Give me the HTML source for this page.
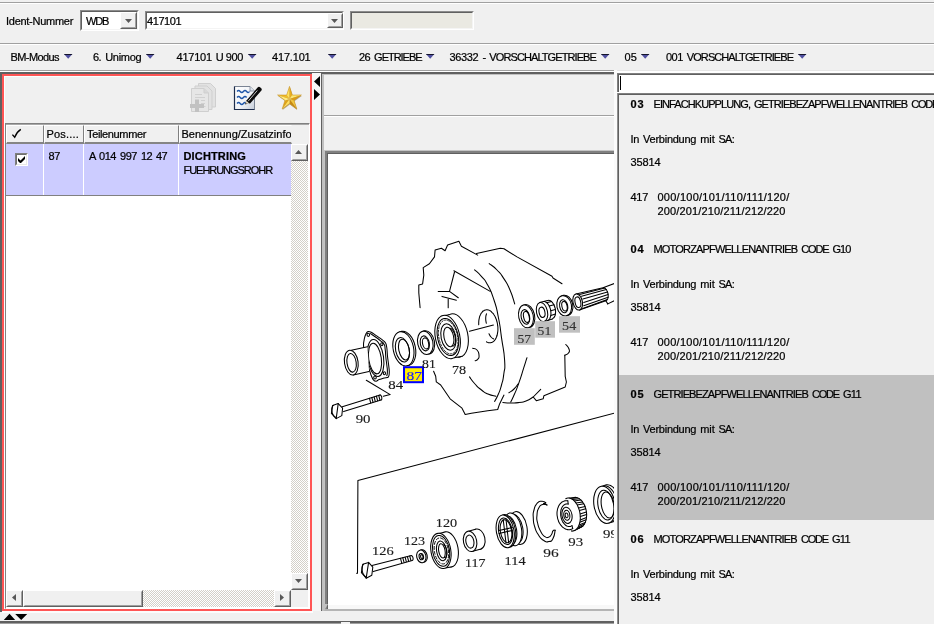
<!DOCTYPE html>
<html><head><meta charset="utf-8"><title>EPC</title>
<style>
html,body{margin:0;padding:0;}
body{width:934px;height:624px;overflow:hidden;background:#f0f0f0;font-family:"Liberation Sans",sans-serif;font-size:11px;color:#000;position:relative;}
.a{position:absolute;}
.t{position:absolute;white-space:nowrap;line-height:13px;height:13px;-webkit-text-stroke:0.22px #000;}
.b{font-weight:bold;}
.r{position:absolute;}
.sunk{position:absolute;box-sizing:border-box;border:1px solid;border-color:#8c8c8c #fff #fff #8c8c8c;}
.sunk>i{position:absolute;left:0;top:0;right:0;bottom:0;border:1px solid;border-color:#606060 #f4f4f4 #f4f4f4 #606060;display:block;}
.btn{position:absolute;box-sizing:border-box;background:#f0f0f0;border:1px solid;border-color:#fff #606060 #606060 #fff;}
.btn>i{position:absolute;left:0;top:0;right:0;bottom:0;border:1px solid;border-color:#f0f0f0 #a0a0a0 #a0a0a0 #f0f0f0;display:block;}
.dith{position:absolute;background-color:#fff;background-image:linear-gradient(45deg,#d4d0c8 25%,transparent 25%,transparent 75%,#d4d0c8 75%),linear-gradient(45deg,#d4d0c8 25%,transparent 25%,transparent 75%,#d4d0c8 75%);background-size:2px 2px;background-position:0 0,1px 1px;}
.hd{position:absolute;box-sizing:border-box;height:19px;top:125px;background:#f0f0f0;border:1px solid;border-color:#fff #808080 #808080 #fff;border-bottom:2px solid #858585;}
#w{position:absolute;left:0;top:0;width:934px;height:624px;overflow:hidden;will-change:transform;}
</style></head><body><div id="w">
<svg width="0" height="0" style="position:absolute"><defs>
<linearGradient id="ag" x1="0" y1="0" x2="0" y2="1"><stop offset="0" stop-color="#6a6aa8"/><stop offset="0.5" stop-color="#2a2a78"/><stop offset="1" stop-color="#202060"/></linearGradient>
</defs></svg>
<!-- frame lines -->
<div class="r" style="left:0;top:2px;width:934px;height:1px;background:#a0a0a0"></div>
<div class="r" style="left:0;top:3px;width:934px;height:1px;background:#fff"></div>
<div class="r" style="left:0;top:43px;width:934px;height:1px;background:#a0a0a0"></div>
<div class="r" style="left:0;top:44px;width:934px;height:1px;background:#fff"></div>
<div class="r" style="left:0;top:70px;width:934px;height:1px;background:#a0a0a0"></div>
<div class="r" style="left:0;top:71px;width:934px;height:1px;background:#fff"></div>
<!-- ident row -->
<div class="sunk" style="left:80px;top:10px;width:59px;height:21px;background:#fff"><i></i></div>
<div class="btn" style="left:120px;top:12px;width:17px;height:17px"><i></i></div>
<svg class="a" style="left:125px;top:19px" width="7" height="4"><path d="M0 0h7l-3.5 4z" fill="#585858"/></svg>
<div class="sunk" style="left:145px;top:11px;width:199px;height:19px;background:#fff"><i></i></div>
<div class="btn" style="left:327px;top:13px;width:16px;height:15px"><i></i></div>
<svg class="a" style="left:331px;top:19px" width="7" height="4"><path d="M0 0h7l-3.5 4z" fill="#585858"/></svg>
<div class="sunk" style="left:350px;top:11px;width:124px;height:19px;background:#eae9e2"><i></i></div>

<!-- left panel -->
<div class="r" style="left:0;top:72px;width:312px;height:2px;background:#606060"></div>
<div class="r" style="left:0;top:72px;width:2px;height:540px;background:#606060"></div>
<div class="r" style="left:2px;top:74px;width:310px;height:537px;box-sizing:border-box;border:2px solid #ff5555;"></div>
<div class="r" style="left:4px;top:76px;width:1px;height:533px;background:#f8ffff"></div>
<div class="r" style="left:4px;top:76px;width:306px;height:1px;background:#f8ffff"></div>
<div class="r" style="left:312px;top:73px;width:9px;height:538px;background:#f6f6f6"></div>
<!-- table scrollpane -->
<div class="r" style="left:5px;top:123px;width:305px;height:486px;box-sizing:border-box;border:1px solid;border-color:#808080 #fff #fff #808080;background:#fff"></div>
<div class="r" style="left:6px;top:124px;width:303px;height:20px;background:#f0f0f0"></div>
<div class="r" style="left:6px;top:124px;width:303px;height:1px;background:#a8a8a8"></div>
<div class="hd" style="left:6px;width:38px"></div>
<div class="hd" style="left:44px;width:40px"></div>
<div class="hd" style="left:84px;width:95px"></div>
<div class="hd" style="left:179px;width:113px;border-right-color:#f0f0f0"></div>
<svg class="a" style="left:11px;top:128px" width="12" height="11" viewBox="0 0 12 11"><path d="M1.4 6.6L3.7 9.2C5 6 7 3.2 9.8 1.4" fill="none" stroke="#000" stroke-width="1.35"/></svg>
<!-- row -->
<div class="r" style="left:6px;top:144px;width:285px;height:51px;background:#ccccff"></div>
<div class="r" style="left:6px;top:195px;width:285px;height:1px;background:#808080"></div>
<div class="r" style="left:43px;top:144px;width:1px;height:51px;background:#fff"></div>
<div class="r" style="left:83px;top:144px;width:1px;height:51px;background:#fff"></div>
<div class="r" style="left:178px;top:144px;width:1px;height:51px;background:#fff"></div>
<div class="r" style="left:15px;top:153px;width:13px;height:13px;box-sizing:border-box;background:#fff;border:1px solid;border-color:#808080 #fff #fff #808080"></div>
<div class="r" style="left:16px;top:154px;width:11px;height:11px;box-sizing:border-box;border:1px solid;border-color:#707070 #e8e8e8 #e8e8e8 #707070"></div>
<svg class="a" style="left:18px;top:156px" width="7" height="7" viewBox="0 0 7 7"><path d="M0 2v3l2.5 2.5L7 3V0L2.5 4.5z" fill="#000"/></svg>
<!-- v scrollbar -->
<div class="dith" style="left:291px;top:144px;width:17px;height:446px"></div>
<div class="btn" style="left:291px;top:144px;width:17px;height:17px"><i></i></div>
<svg class="a" style="left:295px;top:150px" width="7" height="4"><path d="M0 4h7l-3.5 -4z" fill="#585858"/></svg>
<div class="btn" style="left:291px;top:573px;width:17px;height:17px"><i></i></div>
<svg class="a" style="left:295px;top:579px" width="7" height="4"><path d="M0 0h7l-3.5 4z" fill="#585858"/></svg>
<!-- h scrollbar -->
<div class="dith" style="left:6px;top:590px;width:285px;height:17px"></div>
<div class="btn" style="left:6px;top:590px;width:17px;height:17px"><i></i></div>
<svg class="a" style="left:12px;top:594px" width="4" height="7"><path d="M4 0v7l-4 -3.500z" fill="#585858"/></svg>
<div class="btn" style="left:23px;top:590px;width:120px;height:17px"><i></i></div>
<div class="btn" style="left:274px;top:590px;width:17px;height:17px"><i></i></div>
<svg class="a" style="left:280px;top:594px" width="4" height="7"><path d="M0 0v7l4 -3.500z" fill="#585858"/></svg>
<div class="r" style="left:291px;top:590px;width:17px;height:17px;background:#f0f0f0"></div>
<!-- bottom arrows -->
<div class="r" style="left:2px;top:611px;width:311px;height:2px;background:#fcfcfc"></div>
<svg class="a" style="left:3px;top:613px" width="26" height="8" viewBox="0 0 26 8"><path d="M0.800 6.900h11.400L6.500 0.800z M12.200 0.900h12L18.200 6.900z" fill="#000"/></svg>
<div class="r" style="left:0;top:621px;width:934px;height:2px;background:#606060"></div>
<div class="r" style="left:0;top:623px;width:934px;height:1px;background:#a0a0a0"></div>
<div class="r" style="left:341px;top:622px;width:9px;height:2px;background:#f4f4f4"></div>
<!-- splitter arrows -->
<svg class="a" style="left:313px;top:76px" width="8" height="25" viewBox="0 0 8 25"><path d="M7 0v11L1 5.5z M1 13v11l6 -5.5z" fill="#000"/></svg>

<!-- middle panel -->
<div class="r" style="left:312px;top:72px;width:9px;height:1px;background:#606060"></div>
<div class="r" style="left:321px;top:72px;width:293px;height:2px;background:#606060"></div>
<div class="r" style="left:321px;top:72px;width:1px;height:539px;background:#606060"></div>
<div class="r" style="left:322px;top:74px;width:2px;height:537px;background:#c0c0c0"></div>
<div class="r" style="left:322px;top:74px;width:292px;height:1px;background:#c0c0c0"></div>
<div class="r" style="left:324px;top:115px;width:290px;height:1px;background:#a0a0a0"></div>
<div class="r" style="left:324px;top:116px;width:290px;height:1px;background:#fff"></div>
<!-- image frame -->
<div class="r" style="left:324px;top:150px;width:290px;height:461px;background:#c4c4c4"></div>
<div class="r" style="left:325px;top:151px;width:289px;height:458px;background:#808080"></div>
<div class="r" style="left:327px;top:153px;width:287px;height:456px;background:#606060"></div>
<div class="r" style="left:328px;top:154px;width:286px;height:455px;background:#f8f8f8"></div>
<div class="r" style="left:324px;top:609px;width:290px;height:2px;background:#b4b4b4"></div>
<div class="r" style="left:328px;top:154px;width:286px;height:451px;background:#fff"></div>
<svg class="a" style="left:322px;top:604px" width="8" height="7" viewBox="0 0 8 7"><path d="M0 0H6L2 7H0z" fill="#c0c0c0"/><path d="M3.2 0H5.2L6.2 1L2.8 7H0.6z" fill="#707070" opacity="0.0"/></svg>
<div class="r" style="left:614px;top:70px;width:320px;height:1px;background:#e6e6e6"></div>
<div class="r" style="left:614px;top:71px;width:320px;height:2px;background:#fff"></div>
<div class="r" style="left:614px;top:70px;width:3px;height:554px;background:#fbfbfb"></div>

<!-- right panel -->
<div class="r" style="left:617px;top:73px;width:317px;height:20px;background:#fff"></div>
<div class="r" style="left:617px;top:73px;width:317px;height:1px;background:#808080"></div>
<div class="r" style="left:617px;top:74px;width:317px;height:1px;background:#606060"></div>
<div class="r" style="left:617px;top:73px;width:1px;height:19px;background:#808080"></div>
<div class="r" style="left:618px;top:74px;width:1px;height:18px;background:#606060"></div>
<div class="r" style="left:620px;top:76px;width:1px;height:14px;background:#000"></div>
<div class="r" style="left:617px;top:93px;width:317px;height:531px;background:#f0f0f0"></div>
<div class="r" style="left:617px;top:93px;width:317px;height:1px;background:#808080"></div>
<div class="r" style="left:617px;top:94px;width:317px;height:1px;background:#606060"></div>
<div class="r" style="left:617px;top:93px;width:1px;height:531px;background:#909090"></div>
<div class="r" style="left:618px;top:94px;width:1px;height:530px;background:#606060"></div>
<div class="r" style="left:619px;top:375px;width:315px;height:145px;background:#c0c0c0"></div>
<svg class="a" style="left:184px;top:78px" width="125" height="40" viewBox="184 78 125 40">
<g stroke="#cfcfcf" stroke-width="1" fill="#e2e2e2">
<path d="M198.5 83.5h12l5 5v18.5h-17z"/>
<path d="M195 86h12l5 5v18.5h-17z"/>
<path d="M191.5 88.500h12.500l4.500 4.500v18.500h-17z" fill="#e6e6e6"/>
<path d="M204 88.500v4.500h4.500" fill="#d8d8d8"/>
</g>
<g stroke="#d0d0d0" stroke-width="1"><path d="M195 94.500h7M195 97.500h10M201 100.500h4M201 103.500h4M204 106.500h1.500"/></g>
<path d="M195 99.500h4v4.500h5v4h-5v4h-4v-4h-5v-4h5z" fill="#c2c2c2"/>
<defs><linearGradient id="ng" x1="0" y1="0" x2="1" y2="1"><stop offset="0" stop-color="#ffffff"/><stop offset="0.6" stop-color="#eef1f6"/><stop offset="1" stop-color="#c4ccd8"/></linearGradient></defs>
<path d="M234.500 86.500h15.500l4.500 4.500v18.500h-20z" fill="url(#ng)" stroke="#7a8494" stroke-width="1"/>
<path d="M234.500 86.500v23h20" fill="none" stroke="#1c2c4c" stroke-width="1.2"/>
<path d="M250 86.500v4.500h4.500" fill="#dfe4ec" stroke="#7a8494" stroke-width="0.8"/>
<g fill="none" stroke="#1f56a8" stroke-width="1.3"><path d="M237 91.500q1.600 -2 3.200 0t3.200 0t3.200 0t3 0"/><path d="M237 97.500q1.600 -2 3.200 0t3.200 0t3.200 0"/><path d="M237 103.500q1.600 -2 3.200 0t3.200 0t2.400 0"/></g>
<path d="M245.300 104.300l1.200 -3.700l2.600 2.200z" fill="#f4e6c8" stroke="#555" stroke-width="0.4"/>
<path d="M246.300 100.800L257.600 87.600a1.900 1.900 0 0 1 2.700 -0.200l0.700 0.600a1.900 1.900 0 0 1 0.200 2.700L249.900 103.800z" fill="#0a0a0a"/>
<path d="M248.200 101.200L257.300 90.500" stroke="#ffffff" stroke-width="0.9" opacity="0.85"/>
<path d="M245.300 104.300l0.500 -1.400l0.900 0.800z" fill="#000"/>
<g><defs><filter id="sb" x="-20%" y="-20%" width="140%" height="140%"><feGaussianBlur stdDeviation="0.7"/></filter></defs><path d="M289.5 86.4L292.3 95.1L301.4 95L294 100.4L296.8 109L289.5 103.6L282.2 109L285 100.4L277.6 95L286.7 95.1Z" fill="#705010" filter="url(#sb)" transform="translate(0.4 0.9)" opacity="0.45"/><path d="M289.5 98.9L286.7 95.1L289.5 86.4Z" fill="#ffe45c"/><path d="M289.5 98.9L289.5 86.4L292.3 95.1Z" fill="#e9ae1e"/><path d="M289.5 98.9L292.3 95.1L301.4 95Z" fill="#ffe870"/><path d="M289.5 98.9L301.4 95L294 100.4Z" fill="#dc9c14"/><path d="M289.5 98.9L294 100.4L296.8 109Z" fill="#f4c83c"/><path d="M289.5 98.9L296.8 109L289.5 103.6Z" fill="#c88a10"/><path d="M289.5 98.9L289.5 103.6L282.2 109Z" fill="#ffe060"/><path d="M289.5 98.9L282.2 109L285 100.4Z" fill="#e0a418"/><path d="M289.5 98.9L285 100.4L277.6 95Z" fill="#ffec80"/><path d="M289.5 98.9L277.6 95L286.7 95.1Z" fill="#f0bc28"/><path d="M289.5 86.4L292.3 95.1L301.4 95L294 100.4L296.8 109L289.5 103.6L282.2 109L285 100.4L277.6 95L286.7 95.1Z" fill="none" stroke="#c8901c" stroke-width="0.6" stroke-linejoin="round"/></g>
</svg>
<svg class="a" style="left:64px;top:54px" width="9" height="5" viewBox="0 0 9 5"><path d="M0 0h8.400L4.200 4.700z" fill="#5050a0"/><path d="M0 0h8.400l-0.900 1h-6.600z" fill="#14142a"/></svg>
<svg class="a" style="left:146px;top:54px" width="9" height="5" viewBox="0 0 9 5"><path d="M0 0h8.400L4.200 4.700z" fill="#5050a0"/><path d="M0 0h8.400l-0.900 1h-6.600z" fill="#14142a"/></svg>
<svg class="a" style="left:248px;top:54px" width="9" height="5" viewBox="0 0 9 5"><path d="M0 0h8.400L4.200 4.700z" fill="#5050a0"/><path d="M0 0h8.400l-0.900 1h-6.600z" fill="#14142a"/></svg>
<svg class="a" style="left:328px;top:54px" width="9" height="5" viewBox="0 0 9 5"><path d="M0 0h8.400L4.200 4.700z" fill="#5050a0"/><path d="M0 0h8.400l-0.900 1h-6.600z" fill="#14142a"/></svg>
<svg class="a" style="left:426px;top:54px" width="9" height="5" viewBox="0 0 9 5"><path d="M0 0h8.400L4.200 4.700z" fill="#5050a0"/><path d="M0 0h8.400l-0.900 1h-6.600z" fill="#14142a"/></svg>
<svg class="a" style="left:601px;top:54px" width="9" height="5" viewBox="0 0 9 5"><path d="M0 0h8.400L4.200 4.700z" fill="#5050a0"/><path d="M0 0h8.400l-0.900 1h-6.600z" fill="#14142a"/></svg>
<svg class="a" style="left:641px;top:54px" width="9" height="5" viewBox="0 0 9 5"><path d="M0 0h8.400L4.200 4.700z" fill="#5050a0"/><path d="M0 0h8.400l-0.900 1h-6.600z" fill="#14142a"/></svg>
<svg class="a" style="left:798px;top:54px" width="9" height="5" viewBox="0 0 9 5"><path d="M0 0h8.400L4.200 4.700z" fill="#5050a0"/><path d="M0 0h8.400l-0.900 1h-6.600z" fill="#14142a"/></svg>
<span class="t" style="left:6px;top:15px;letter-spacing:-0.27px;">Ident-Nummer</span>
<span class="t" style="left:86px;top:15px;letter-spacing:-1.22px;">WDB</span>
<span class="t" style="left:147px;top:15px;letter-spacing:-0.42px;">417101</span>
<span class="t" style="left:10.5px;top:51px;letter-spacing:-0.59px;">BM-Modus</span>
<span class="t" style="left:0;top:0;width:0"><span class="t" style="left:93px;top:51px;letter-spacing:-0.55px;">6.</span> <span class="t" style="left:105.125px;top:51px;letter-spacing:-0.26px;">Unimog</span></span>
<span class="t" style="left:0;top:0;width:0"><span class="t" style="left:176.5px;top:51px;letter-spacing:-0.24px;">417101</span> <span class="t" style="left:215.795px;top:51px;letter-spacing:-1.91px;">U</span> <span class="t" style="left:225.871px;top:51px;letter-spacing:-0.41px;">900</span></span>
<span class="t" style="left:272px;top:51px;letter-spacing:-0.18px;">417.101</span>
<span class="t" style="left:0;top:0;width:0"><span class="t" style="left:359px;top:51px;letter-spacing:-0.58px;">26</span> <span class="t" style="left:374.121px;top:51px;letter-spacing:-1.03px;">GETRIEBE</span></span>
<span class="t" style="left:0;top:0;width:0"><span class="t" style="left:449.5px;top:51px;letter-spacing:-0.34px;">36332</span> <span class="t" style="left:482.388px;top:51px;letter-spacing:-0.68px;">-</span> <span class="t" style="left:489.364px;top:51px;letter-spacing:-0.91px;">VORSCHALTGETRIEBE</span></span>
<span class="t" style="left:624.5px;top:51px;letter-spacing:0.12px;">05</span>
<span class="t" style="left:0;top:0;width:0"><span class="t" style="left:666px;top:51px;letter-spacing:-0.5px;">001</span> <span class="t" style="left:686.836px;top:51px;letter-spacing:-0.93px;">VORSCHALTGETRIEBE</span></span>
<span class="t" style="left:46.5px;top:128px;letter-spacing:0.19px;">Pos....</span>
<span class="t" style="left:87px;top:128px;letter-spacing:-0.36px;">Teilenummer</span>
<div class="r" style="left:179px;top:125px;width:112px;height:18px;overflow:hidden"><span class="t" style="left:2.5px;top:3px;">Benennung/Zusatzinfor</span></div>
<span class="t" style="left:48.5px;top:150px;letter-spacing:-0.38px;">87</span>
<span class="t" style="left:0;top:0;width:0"><span class="t" style="left:89px;top:150px;letter-spacing:-1.34px;">A</span> <span class="t" style="left:99px;top:150px;letter-spacing:-0.45px;">014</span> <span class="t" style="left:120px;top:150px;letter-spacing:-0.45px;">997</span> <span class="t" style="left:141px;top:150px;letter-spacing:-0.62px;">12</span> <span class="t" style="left:156px;top:150px;letter-spacing:-0.62px;">47</span></span>
<span class="t b" style="left:183.5px;top:150px;letter-spacing:0.15px;">DICHTRING</span>
<span class="t" style="left:183.5px;top:164px;letter-spacing:-1.04px;">FUEHRUNGSROHR</span>
<span class="t b" style="left:630.5px;top:98px;letter-spacing:0.88px;">03</span>
<span class="t" style="left:0;top:0;width:0"><span class="t" style="left:653.5px;top:98px;letter-spacing:-0.92px;">EINFACHKUPPLUNG,</span> <span class="t" style="left:754.008px;top:98px;letter-spacing:-0.94px;">GETRIEBEZAPFWELLENANTRIEB</span> <span class="t" style="left:911.239px;top:98px;letter-spacing:-1.23px;">CODE</span> <span class="t" style="left:942.088px;top:98px;letter-spacing:-0.96px;">G08</span></span>
<span class="t" style="left:0;top:0;width:0"><span class="t" style="left:630.5px;top:133px;letter-spacing:-0.24px;">In</span> <span class="t" style="left:643.075px;top:133px;letter-spacing:-0.25px;">Verbindung</span> <span class="t" style="left:700.145px;top:133px;letter-spacing:-0.05px;">mit</span> <span class="t" style="left:718.523px;top:133px;letter-spacing:-0.75px;">SA:</span></span>
<span class="t" style="left:630.5px;top:156px;letter-spacing:-0.12px;">35814</span>
<span class="t" style="left:630.5px;top:191px;letter-spacing:-0.29px;">417</span>
<span class="t" style="left:657.5px;top:191px;letter-spacing:0.25px;">000/100/101/110/111/120/</span>
<span class="t" style="left:657.5px;top:205px;letter-spacing:0.15px;">200/201/210/211/212/220</span>
<span class="t b" style="left:630.5px;top:243px;letter-spacing:0.88px;">04</span>
<span class="t" style="left:0;top:0;width:0"><span class="t" style="left:653.5px;top:243px;letter-spacing:-0.82px;">MOTORZAPFWELLENANTRIEB</span> <span class="t" style="left:801.25px;top:243px;letter-spacing:-1.16px;">CODE</span> <span class="t" style="left:832.408px;top:243px;letter-spacing:-0.9px;">G10</span></span>
<span class="t" style="left:0;top:0;width:0"><span class="t" style="left:630.5px;top:278px;letter-spacing:-0.24px;">In</span> <span class="t" style="left:643.075px;top:278px;letter-spacing:-0.25px;">Verbindung</span> <span class="t" style="left:700.145px;top:278px;letter-spacing:-0.05px;">mit</span> <span class="t" style="left:718.523px;top:278px;letter-spacing:-0.75px;">SA:</span></span>
<span class="t" style="left:630.5px;top:301px;letter-spacing:-0.12px;">35814</span>
<span class="t" style="left:630.5px;top:336px;letter-spacing:-0.29px;">417</span>
<span class="t" style="left:657.5px;top:336px;letter-spacing:0.25px;">000/100/101/110/111/120/</span>
<span class="t" style="left:657.5px;top:350px;letter-spacing:0.15px;">200/201/210/211/212/220</span>
<span class="t b" style="left:630.5px;top:388px;letter-spacing:0.88px;">05</span>
<span class="t" style="left:0;top:0;width:0"><span class="t" style="left:653.5px;top:388px;letter-spacing:-0.89px;">GETRIEBEZAPFWELLENANTRIEB</span> <span class="t" style="left:811.882px;top:388px;letter-spacing:-1.18px;">CODE</span> <span class="t" style="left:842.957px;top:388px;letter-spacing:-0.65px;">G11</span></span>
<span class="t" style="left:0;top:0;width:0"><span class="t" style="left:630.5px;top:423px;letter-spacing:-0.24px;">In</span> <span class="t" style="left:643.075px;top:423px;letter-spacing:-0.25px;">Verbindung</span> <span class="t" style="left:700.145px;top:423px;letter-spacing:-0.05px;">mit</span> <span class="t" style="left:718.523px;top:423px;letter-spacing:-0.75px;">SA:</span></span>
<span class="t" style="left:630.5px;top:446px;letter-spacing:-0.12px;">35814</span>
<span class="t" style="left:630.5px;top:481px;letter-spacing:-0.29px;">417</span>
<span class="t" style="left:657.5px;top:481px;letter-spacing:0.25px;">000/100/101/110/111/120/</span>
<span class="t" style="left:657.5px;top:495px;letter-spacing:0.15px;">200/201/210/211/212/220</span>
<span class="t b" style="left:630.5px;top:533px;letter-spacing:0.88px;">06</span>
<span class="t" style="left:0;top:0;width:0"><span class="t" style="left:653.5px;top:533px;letter-spacing:-0.84px;">MOTORZAPFWELLENANTRIEB</span> <span class="t" style="left:800.875px;top:533px;letter-spacing:-1.18px;">CODE</span> <span class="t" style="left:831.954px;top:533px;letter-spacing:-0.65px;">G11</span></span>
<span class="t" style="left:0;top:0;width:0"><span class="t" style="left:630.5px;top:568px;letter-spacing:-0.24px;">In</span> <span class="t" style="left:643.075px;top:568px;letter-spacing:-0.25px;">Verbindung</span> <span class="t" style="left:700.145px;top:568px;letter-spacing:-0.05px;">mit</span> <span class="t" style="left:718.523px;top:568px;letter-spacing:-0.75px;">SA:</span></span>
<span class="t" style="left:630.5px;top:591px;letter-spacing:-0.12px;">35814</span>
<span class="t" style="left:630.5px;top:626px;letter-spacing:-0.29px;">417</span>
<span class="t" style="left:657.5px;top:626px;letter-spacing:0.25px;">000/100/101/110/111/120/</span>
<span class="t" style="left:657.5px;top:640px;letter-spacing:0.15px;">200/201/210/211/212/220</span>
<svg class="a" style="left:328px;top:154px" width="286" height="451" viewBox="328 154 286 451">
<g fill="none" stroke="#000" stroke-width="1.05" stroke-linecap="round" stroke-linejoin="round">
<path d="M420.1 307.7 L418.8 292.7 L418.8 285.1 L422.6 283.9 L423.8 275.1 L423.2 267.6 L429.4 263.8 L434.5 256.9 L435.1 250.1 L441.4 248.2 L445.1 250.7 L447.6 245 L458.9 241.3 L461.4 246.3 L477.7 255.1"/>
<path d="M476.5 253.6 L500.3 248.2 L504 248.8 L517 256.9 L552 276.3 L553 278 L562 283.8"/>
<path d="M453.9 270.7 L490.2 291.4"/>
<path d="M454.5 272 L449.5 291.4"/>
<path d="M438.2 291.4 L449.5 291.4 L458.3 297.7"/>
<path d="M442 296.4 L456.4 300.2"/>
<path d="M448.2 298.9 L448.2 307.7"/>
<path d="M474.6 269.8 C477 272.1 477.4 271.7 481.8 276.8 C486.2 281.9 483.6 277.4 487.7 285.1 C491.8 292.8 490.4 289 494 300 C497.6 311 496 305.5 498.5 318 C501 330.5 499.5 323.6 501.5 337.6 C503.5 351.6 503.8 347.9 504.6 360 C505.4 372.1 504.8 365.7 503.8 374 C502.8 382.3 503.3 378.3 501.5 385 C499.7 391.7 500.7 388.5 498.4 394 C496.1 399.5 495.9 398.9 494.6 401.4"/>
<path d="M489.2 263.6 C491.8 265.7 492.1 264.9 497 270 C501.9 275.1 499.7 272.2 504 278.9 C508.3 285.6 506.4 281.7 510 290 C513.6 298.3 513.1 299.3 514.7 303.9"/>
<path d="M433.6 371.3 L435.7 376.3 L436.3 381.9 L440.7 385 L450.1 398.8 L462 408.2 L465.2 414.5 L471.4 413.3 L487.7 410.8 L497.7 409.5 L499.6 403.9 L502 399 L504 395.1"/>
<path d="M469.5 376.9 C471.3 379.3 471 379.6 475 384 C479 388.4 477.2 386.7 481.5 390 C485.8 393.3 483.2 391.9 488 394 C492.8 396.1 493.3 395.5 495.9 396.3"/>
<path d="M502.8 402.6 C505.4 402.7 505.4 403 510.7 403 C516 403 513.7 403.3 518.8 402.6 C523.9 401.9 521.2 402.9 526 401 C530.8 399.1 530.8 398.3 533.2 397"/>
<path d="M540.7 389.4 L533.2 397 L536.3 400.7 L543.2 398.8 L543.9 395.7 L565.2 387 L566.4 382 L565.2 376.3 L564.8 355.2"/>
<path d="M564.8 355.2 C566 354.5 567.1 355.1 568.5 353 C569.9 350.9 569.9 351.8 569 349 C568.1 346.2 566.9 346 565.8 344.5"/>
<path d="M527 357.7 C525.9 361 526.5 359.2 523.8 367.7 C521.1 376.2 521.9 374.4 518.8 383.2 C515.7 392 517.2 387.7 514.5 394 C511.8 400.3 512 399.3 510.7 402"/>
<path d="M508.8 392.8 C510.5 391.5 510.9 392 514 389 C517.1 386 516.8 385.5 518.2 383.8"/>
<path d="M478.7 324.7 C478.8 323.5 478.6 323.4 478.8 321 C479.1 318.7 478.9 319.8 479.4 317.6 C480 315.5 479.6 316.4 480.5 314.7 C481.3 312.9 480.9 313.6 482 312.3 C483 311 482.5 311.5 483.8 310.7 C485 309.9 484.4 310.1 485.8 309.9 C487.2 309.6 486.5 309.6 488 309.9 C489.4 310.3 488.7 310 490.1 310.8 C491.6 311.7 490.9 311.2 492.2 312.6 C493.6 313.9 493 313.2 494.1 315 C495.3 316.8 494.8 315.9 495.7 318 C496.6 320.2 496.2 319.1 496.9 321.5 C497.5 323.9 497.3 322.7 497.6 325.2 C498 327.7 497.9 326.5 497.9 328.9 C497.9 331.4 498 330.3 497.6 332.6 C497.3 334.9 497.2 334.8 496.9 335.9"/>
<path d="M496.9 335.9 C496.8 336.2 496.8 336.2 496.5 336.9 C496.3 337.6 496.4 337.3 496.1 337.9 C495.8 338.6 496 338.3 495.6 338.8 C495.3 339.4 495.5 339.1 495.1 339.7 C494.7 340.2 494.9 340 494.5 340.4 C494.1 340.9 494.3 340.7 493.9 341.1 C493.5 341.5 493.7 341.3 493.3 341.6 C492.8 342 493 341.8 492.6 342.1 C492.1 342.3 492.3 342.2 491.9 342.4 C491.4 342.6 491.6 342.5 491.1 342.6 C490.6 342.8 490.9 342.7 490.4 342.8 C489.8 342.8 490.1 342.8 489.6 342.8 C489.1 342.8 489.3 342.8 488.8 342.7 C488.3 342.6 488.5 342.7 488 342.5 C487.5 342.3 487.8 342.4 487.2 342.2 C486.7 341.9 486.7 341.9 486.5 341.8"/>
<path d="M486.5 313.8 C486.2 315.2 485.8 314.9 485.7 318 C485.6 321.1 486.1 321.5 486.3 323.2"/>
<path d="M489 333.8 C489.7 334.9 489.5 335.3 491 337 C492.5 338.7 492.7 338.3 493.6 338.9"/>
<path d="M469.5 331.3 L493.4 325.1"/>
<path d="M472.7 348.2 C474.1 348.8 474.9 347.7 477 350 C479.1 352.3 478.7 352.1 479 355.1 C479.3 358.1 479.3 357.1 478 359 C476.7 360.9 476.1 360.2 475.2 360.8"/>
<ellipse cx="455.6" cy="335.5" rx="12.2" ry="22" transform="rotate(-12 455.6 335.5)" fill="#fff"/>
<path d="M441 316.2 L449 314.7 L462.2 356.3 L454.2 357.8Z" fill="#fff" stroke="none"/>
<path d="M441 316.2 L449 314.7"/>
<path d="M454.2 357.8 L462.2 356.3"/>
<ellipse cx="447.6" cy="337" rx="12.2" ry="22" transform="rotate(-12 447.6 337)" fill="#fff"/>
<ellipse cx="447.9" cy="337" rx="10.3" ry="18.8" transform="rotate(-12 447.9 337)"/>
<ellipse cx="448.2" cy="337" rx="9.3" ry="17.2" transform="rotate(-12 448.2 337)" stroke-dasharray="2 1.5" stroke-width="0.8"/>
<ellipse cx="448.4" cy="337" rx="7.3" ry="13.4" transform="rotate(-12 448.4 337)"/>
<ellipse cx="448.8" cy="337" rx="4.8" ry="10" transform="rotate(-12 448.8 337)"/>
<path d="M450.6 328.3 C450.9 328.5 450.9 328.4 451.4 328.8 C452 329.3 451.7 329 452.2 329.7 C452.8 330.3 452.5 330 453 330.8 C453.5 331.6 453.3 331.2 453.7 332.1 C454.1 333 453.9 332.6 454.3 333.6 C454.7 334.6 454.5 334.1 454.8 335.2 C455.1 336.3 454.9 335.7 455.1 336.9 C455.3 338 455.3 337.4 455.4 338.5 C455.5 339.6 455.5 339.1 455.5 340.1 C455.5 341.2 455.5 340.7 455.4 341.7 C455.3 342.6 455.4 342.2 455.2 343 C455 343.8 455.1 343.5 454.8 344.1 C454.5 344.8 454.7 344.5 454.3 345 C454 345.5 454.2 345.3 453.7 345.7 C453.3 346 453.5 345.9 453.1 346 C452.6 346.1 452.6 346 452.3 346"/>
<ellipse cx="426.9" cy="342.4" rx="7.6" ry="11.8" transform="rotate(-12 426.9 342.4)" fill="#fff"/>
<ellipse cx="425.3" cy="342.8" rx="7.6" ry="11.8" transform="rotate(-12 425.3 342.8)" fill="#fff"/>
<ellipse cx="424.8" cy="343.4" rx="4.5" ry="7.6" transform="rotate(-12 424.8 343.4)"/>
<ellipse cx="425.6" cy="343.4" rx="3" ry="5.6" transform="rotate(-12 425.6 343.4)"/>
<ellipse cx="405.2" cy="348.4" rx="10.2" ry="17.4" transform="rotate(-12 405.2 348.4)" fill="#fff"/>
<ellipse cx="403.4" cy="348.8" rx="10.2" ry="17.4" transform="rotate(-12 403.4 348.8)" fill="#fff"/>
<ellipse cx="402.4" cy="349.8" rx="6.8" ry="12.4" transform="rotate(-12 402.4 349.8)"/>
<ellipse cx="404" cy="349.6" rx="5.2" ry="10.6" transform="rotate(-12 404 349.6)"/>
<path d="M366 333.8 C366.6 332.6 367.2 331.8 368.1 331.5 C369 331.2 369.9 331.6 371.2 332.3 C372.5 333 374.4 334.4 376.2 335.6 C377.9 336.8 380.1 338.2 381.7 339.4 C383.3 340.6 384.7 341.4 385.6 342.9 C386.5 344.4 386.6 346.3 386.9 348.5 C387.2 350.7 387.2 353.7 387.5 356.3 C387.8 358.9 388.2 361.5 388.5 364 C388.8 366.5 389.3 369.4 389.3 371.5 C389.3 373.6 389.4 375.7 388.5 376.8 C387.6 377.9 385.6 377.5 384 378 C382.4 378.5 380.3 379.1 379 379.6 C377.7 380.1 377.1 381.2 376.2 381.2 C375.3 381.2 374.2 380.8 373.4 379.8 C372.6 378.9 372.1 377.8 371.2 375.5 C370.3 373.2 369.2 369.4 368.2 366 C367.2 362.6 366 358.4 365.2 355 C364.4 351.6 363.6 348.1 363.5 345.3 C363.4 342.6 364 340.4 364.4 338.5 C364.8 336.6 365.4 335 366 333.8Z" fill="#fff"/>
<path d="M370.5 333.6 C372.2 334.7 372.1 334.6 375.5 337 C378.9 339.4 377.8 338.4 380.6 340.8 C383.4 343.2 382.5 341.3 384 344.2 C385.5 347.1 384.6 345.2 385.2 349.5 C385.8 353.8 385.3 351.8 385.8 357 C386.3 362.2 386.3 360.2 386.8 365 C387.3 369.8 387.4 368 387.4 371.5 C387.4 375 387 374.2 386.8 375.6"/>
<ellipse cx="375.6" cy="358" rx="8" ry="18.6" transform="rotate(-8 375.6 358)"/>
<ellipse cx="375" cy="358.6" rx="6.3" ry="15.4" transform="rotate(-8 375 358.6)"/>
<ellipse cx="368.3" cy="334.8" rx="1.3" ry="1.6"/>
<ellipse cx="381.8" cy="344.2" rx="1.1" ry="1.5"/>
<ellipse cx="384.4" cy="373.2" rx="1.1" ry="1.5"/>
<ellipse cx="375" cy="377.4" rx="1.3" ry="1.5"/>
<path d="M351.3 350.2 L367.5 346.8 L369 371.6 L353.3 375Z" fill="#fff" stroke="none"/>
<path d="M351.3 350.2 L367.5 346.8"/>
<path d="M353.3 375 L369 371.6"/>
<ellipse cx="351.3" cy="362.6" rx="6.8" ry="12.5" transform="rotate(-8 351.3 362.6)" fill="#fff"/>
<ellipse cx="351.6" cy="362.8" rx="4.6" ry="9.4" transform="rotate(-8 351.6 362.8)"/>
<path d="M366.3 380.2 L390.2 394.6 L383.3 396.3"/>
<path d="M342.3 406.8 L380.1 395"/>
<path d="M343.6 411.6 L381 399.9"/>
<path d="M379.8 394.9 C379.9 394.9 379.9 394.9 380.1 394.9 C380.2 394.9 380.1 394.9 380.3 395 C380.5 395 380.4 395 380.6 395.1 C380.8 395.3 380.7 395.2 380.8 395.4 C381 395.6 380.9 395.5 381.1 395.7 C381.2 396 381.2 395.9 381.3 396.2 C381.5 396.4 381.4 396.3 381.5 396.6 C381.6 396.9 381.6 396.8 381.7 397.1 C381.7 397.4 381.7 397.3 381.8 397.6 C381.8 397.9 381.8 397.8 381.8 398.1 C381.9 398.4 381.8 398.2 381.8 398.5 C381.8 398.8 381.8 398.7 381.8 399 C381.8 399.2 381.8 399.1 381.7 399.3 C381.6 399.5 381.7 399.4 381.6 399.6 C381.5 399.8 381.5 399.7 381.4 399.8 C381.3 399.9 381.2 399.9 381.2 399.9"/>
<path d="M369.5 398.3 L370.7 402.9"/>
<path d="M371.8 397.6 L373 402.2"/>
<path d="M374.1 396.9 L375.3 401.5"/>
<path d="M376.4 396.1 L377.6 400.7"/>
<path d="M378.7 395.4 L379.9 400"/>
<path d="M332.6 405.6 L338.2 403.6 L342.6 408.2 L341.8 415.6 L336.2 418.6 L331.4 413.4Z" fill="#fff"/>
<path d="M338.2 403.6 L336.2 418.6"/>
<path d="M335.9 417.3 C335.7 417.2 335.7 417.3 335.3 417.1 C334.9 417 335.1 417.1 334.8 416.8 C334.4 416.5 334.5 416.7 334.2 416.3 C333.8 415.9 334 416.1 333.6 415.6 C333.3 415.1 333.4 415.4 333.1 414.8 C332.8 414.2 333 414.5 332.7 413.9 C332.4 413.3 332.6 413.6 332.3 412.9 C332.1 412.2 332.2 412.6 332.1 411.9 C331.9 411.2 332 411.5 331.9 410.8 C331.8 410.1 331.8 410.4 331.8 409.8 C331.8 409.1 331.8 409.4 331.8 408.7 C331.9 408.1 331.9 408.4 332 407.8 C332.1 407.2 332 407.5 332.2 407 C332.4 406.5 332.3 406.7 332.5 406.3 C332.8 405.9 332.6 406 332.9 405.7 C333.2 405.4 333.2 405.5 333.4 405.3"/>
<ellipse cx="527.3" cy="316" rx="7.3" ry="11.6" transform="rotate(-12 527.3 316)" fill="#fff"/>
<ellipse cx="526" cy="316.4" rx="7.3" ry="11.6" transform="rotate(-12 526 316.4)" fill="#fff"/>
<ellipse cx="525.4" cy="316.9" rx="4.2" ry="7.4" transform="rotate(-12 525.4 316.9)"/>
<ellipse cx="526.4" cy="316.9" rx="2.8" ry="5.6" transform="rotate(-12 526.4 316.9)"/>
<ellipse cx="550" cy="309.7" rx="5.4" ry="9.5" transform="rotate(-12 550 309.7)" fill="#fff"/>
<path d="M539.5 302.6 L547.6 300.5 L552.4 318.9 L544.5 321.4Z" fill="#fff" stroke="none"/>
<path d="M539.5 302.6 L547.6 300.5"/>
<path d="M544.5 321.4 L552.4 318.9"/>
<path d="M546.6 302.7 L551.4 301.4"/>
<path d="M549.2 306.1 L554 304.8"/>
<path d="M550.7 310.8 L555.4 309.4"/>
<path d="M550.8 315.6 L555.5 314.1"/>
<path d="M543.7 301.5 C544 301.6 544 301.5 544.7 301.6 C545.4 301.8 545 301.7 545.7 302.1 C546.4 302.4 546.1 302.2 546.7 302.7 C547.4 303.3 547.1 303 547.7 303.7 C548.3 304.4 548 304 548.6 304.9 C549.1 305.8 548.9 305.3 549.4 306.3 C549.8 307.3 549.6 306.8 550 307.9 C550.4 309 550.2 308.4 550.5 309.5 C550.8 310.7 550.7 310.1 550.8 311.3 C551 312.4 550.9 311.8 550.9 313 C551 314.1 551 313.6 550.9 314.6 C550.8 315.7 550.9 315.2 550.7 316.1 C550.4 317.1 550.6 316.7 550.2 317.5 C549.9 318.4 550.1 318 549.7 318.7 C549.2 319.4 549.5 319.1 549 319.6 C548.4 320.1 548.4 320 548.1 320.2"/>
<ellipse cx="542" cy="312" rx="5.5" ry="9.7" transform="rotate(-12 542 312)" fill="#fff"/>
<ellipse cx="542" cy="312.3" rx="2.9" ry="5.2" transform="rotate(-12 542 312.3)"/>
<ellipse cx="565.5" cy="305.4" rx="7.3" ry="10.3" transform="rotate(-12 565.5 305.4)" fill="#fff"/>
<ellipse cx="564.2" cy="305.8" rx="7.3" ry="10.3" transform="rotate(-12 564.2 305.8)" fill="#fff"/>
<ellipse cx="563.7" cy="306.2" rx="4" ry="6.6" transform="rotate(-12 563.7 306.2)"/>
<ellipse cx="564.5" cy="306.2" rx="2.6" ry="4.8" transform="rotate(-12 564.5 306.2)"/>
<path d="M576 294 L603 287.7 L614.5 283.4"/>
<path d="M579.4 310 L605.8 300.7"/>
<path d="M607.8 303.9 L614.5 300.7"/>
<path d="M603 287.7 C603.3 287.7 603.3 287.7 603.7 287.7 C604.2 287.8 604 287.7 604.5 287.9 C605 288.2 604.7 288 605.2 288.4 C605.7 288.8 605.5 288.6 605.9 289.1 C606.4 289.6 606.2 289.3 606.6 290 C607 290.6 606.8 290.3 607.1 291 C607.5 291.8 607.3 291.4 607.6 292.2 C607.9 293 607.7 292.6 607.9 293.5 C608.1 294.3 608 293.9 608.1 294.7 C608.2 295.6 608.2 295.2 608.2 296 C608.2 296.8 608.2 296.4 608.1 297.2 C608 297.9 608.1 297.6 607.9 298.2 C607.7 298.9 607.8 298.6 607.5 299.2 C607.2 299.7 607.4 299.5 607 299.9 C606.7 300.3 606.8 300.1 606.4 300.4 C606 300.6 606 300.6 605.8 300.7"/>
<path d="M605.8 300.7 L607.8 303.9"/>
<path d="M579.6 294.5 L604.8 288.1"/>
<path d="M581.5 296.3 L606.3 289.6"/>
<path d="M582.9 299.1 L607.5 291.9"/>
<path d="M583.7 302.4 L608.1 294.6"/>
<path d="M583.7 305.7 L608.1 297.2"/>
<path d="M582.7 308.5 L607.3 299.4"/>
<ellipse cx="577.7" cy="302" rx="4.7" ry="8.2" transform="rotate(-12 577.7 302)" fill="#fff"/>
<ellipse cx="577.9" cy="302.2" rx="2.8" ry="5.4" transform="rotate(-12 577.9 302.2)"/>
<path d="M356.6 573.3 L357.5 573.3 L357.9 480.4 L614.5 413.2"/>
<path d="M372 565.4 L411.4 555.6"/>
<path d="M373.2 571.6 L412.2 560.4"/>
<path d="M411.2 555.7 C411.3 555.7 411.3 555.6 411.5 555.7 C411.6 555.7 411.5 555.7 411.7 555.7 C411.9 555.8 411.8 555.8 412 555.9 C412.1 556 412.1 556 412.2 556.1 C412.4 556.3 412.3 556.2 412.4 556.5 C412.6 556.7 412.5 556.6 412.7 556.8 C412.8 557.1 412.7 557 412.8 557.3 C412.9 557.6 412.9 557.4 413 557.7 C413 558 413 557.9 413.1 558.2 C413.1 558.5 413.1 558.3 413.1 558.6 C413.1 558.9 413.1 558.8 413.1 559.1 C413.1 559.3 413.1 559.2 413 559.4 C413 559.7 413 559.6 412.9 559.8 C412.8 560 412.9 559.9 412.8 560 C412.7 560.2 412.7 560.1 412.6 560.2 C412.5 560.3 412.5 560.3 412.4 560.3"/>
<path d="M400.5 558.4 L401.7 562.8"/>
<path d="M402.8 557.8 L404 562.2"/>
<path d="M405.1 557.2 L406.3 561.6"/>
<path d="M407.4 556.6 L408.6 561"/>
<path d="M409.7 556 L410.9 560.4"/>
<path d="M362.8 564.2 L368.6 562.4 L372.8 567.2 L371.8 575.2 L366.2 578.2 L361.4 572.6Z" fill="#fff"/>
<path d="M368.6 562.4 L366.2 578.2"/>
<path d="M366.2 576.7 C366 576.6 366 576.7 365.6 576.5 C365.2 576.3 365.4 576.4 365 576.2 C364.6 575.9 364.8 576 364.4 575.6 C364 575.2 364.2 575.4 363.9 574.9 C363.5 574.4 363.7 574.7 363.4 574.1 C363 573.5 363.2 573.8 362.9 573.2 C362.6 572.5 362.8 572.8 362.5 572.1 C362.3 571.4 362.4 571.8 362.3 571.1 C362.1 570.3 362.2 570.7 362.1 570 C362 569.2 362 569.6 362 568.9 C362 568.2 362 568.5 362 567.8 C362.1 567.2 362 567.5 362.1 566.9 C362.3 566.3 362.2 566.6 362.4 566 C362.5 565.5 362.4 565.7 362.7 565.3 C362.9 564.9 362.8 565.1 363.1 564.7 C363.4 564.4 363.4 564.5 363.5 564.4"/>
<ellipse cx="422.6" cy="556.1" rx="4.6" ry="6.4" transform="rotate(-12 422.6 556.1)" fill="#fff"/>
<ellipse cx="421.3" cy="556.4" rx="4.6" ry="6.4" transform="rotate(-12 421.3 556.4)" fill="#fff"/>
<ellipse cx="421.3" cy="556.6" rx="2.2" ry="3.2" transform="rotate(-12 421.3 556.6)"/>
<ellipse cx="421.8" cy="556.6" rx="1.2" ry="2" transform="rotate(-12 421.8 556.6)"/>
<ellipse cx="448.2" cy="549.4" rx="9.9" ry="17.8" transform="rotate(-10 448.2 549.4)" fill="#fff"/>
<path d="M436.2 533.9 L443.5 532.4 L452.9 566.4 L445.6 567.9Z" fill="#fff" stroke="none"/>
<path d="M436.2 533.9 L443.5 532.4"/>
<path d="M445.6 567.9 L452.9 566.4"/>
<ellipse cx="440.9" cy="550.9" rx="9.9" ry="17.8" transform="rotate(-10 440.9 550.9)" fill="#fff"/>
<ellipse cx="441.1" cy="550.9" rx="8.4" ry="15.6" transform="rotate(-10 441.1 550.9)"/>
<ellipse cx="441.4" cy="550.9" rx="7" ry="13.2" transform="rotate(-10 441.4 550.9)" stroke-dasharray="3 2" stroke-width="0.9"/>
<ellipse cx="441.6" cy="550.9" rx="5" ry="10" transform="rotate(-10 441.6 550.9)"/>
<ellipse cx="441.9" cy="550.9" rx="3.2" ry="7.2" transform="rotate(-10 441.9 550.9)"/>
<path d="M443.8 544.6 C444 544.8 444 544.7 444.3 545.1 C444.7 545.4 444.5 545.2 444.9 545.7 C445.2 546.2 445 545.9 445.4 546.5 C445.7 547.1 445.5 546.8 445.8 547.5 C446.1 548.1 446 547.8 446.2 548.5 C446.4 549.3 446.3 548.9 446.5 549.7 C446.7 550.5 446.6 550.1 446.7 550.9 C446.9 551.7 446.8 551.3 446.9 552.1 C446.9 552.9 446.9 552.5 446.9 553.3 C446.9 554 446.9 553.7 446.8 554.4 C446.7 555 446.8 554.7 446.6 555.3 C446.5 555.9 446.6 555.6 446.3 556.1 C446.1 556.6 446.3 556.4 446 556.8 C445.7 557.1 445.9 557 445.6 557.2 C445.3 557.4 445.4 557.3 445.1 557.4 C444.7 557.5 444.7 557.4 444.5 557.4"/>
<ellipse cx="478.3" cy="539.1" rx="6.6" ry="10.3" transform="rotate(-12 478.3 539.1)" fill="#fff"/>
<path d="M467.4 531.5 L475.6 529.2 L481 549 L472.8 551.3Z" fill="#fff" stroke="none"/>
<path d="M467.4 531.5 L475.6 529.2"/>
<path d="M472.8 551.3 L481 549"/>
<ellipse cx="470.1" cy="541.4" rx="6.6" ry="10.3" transform="rotate(-12 470.1 541.4)" fill="#fff"/>
<ellipse cx="469.9" cy="541.6" rx="4" ry="6.6" transform="rotate(-12 469.9 541.6)"/>
<ellipse cx="518.2" cy="528" rx="8.8" ry="16.6" transform="rotate(-10 518.2 528)" fill="#fff"/>
<ellipse cx="515.2" cy="528.8" rx="7.6" ry="14.6" transform="rotate(-10 515.2 528.8)" fill="#fff"/>
<ellipse cx="512.7" cy="529.4" rx="8.8" ry="16.6" transform="rotate(-10 512.7 529.4)" fill="#fff"/>
<ellipse cx="509.2" cy="530.3" rx="7.4" ry="14.4" transform="rotate(-10 509.2 530.3)" fill="#fff"/>
<ellipse cx="506.7" cy="531" rx="8.8" ry="16.6" transform="rotate(-10 506.7 531)" fill="#fff"/>
<ellipse cx="505.2" cy="531.3" rx="8.8" ry="16.6" transform="rotate(-10 505.2 531.3)" fill="#fff"/>
<ellipse cx="505.5" cy="531.3" rx="6.8" ry="13.4" transform="rotate(-10 505.5 531.3)"/>
<ellipse cx="506" cy="531.3" rx="5.6" ry="11.6" transform="rotate(-10 506 531.3)"/>
<path d="M498.8 530.6 L512.4 527.6"/>
<path d="M499 533.4 L512.2 530.4"/>
<path d="M503.2 519.5 L506 543"/>
<path d="M506 519.2 L508.6 542.2"/>
<path d="M547 505 C545.8 504.5 543.9 504.2 543.5 503.5 C543.1 502.8 546.5 503.6 545.8 502.8 C545.1 502 544.4 501 541.5 501.2 C538.6 501.4 539.5 500.6 537 503.5 C534.5 506.4 535.2 505.2 534 510 C532.8 514.8 533 512.3 533.3 518 C533.6 523.7 533.1 521.3 534.8 527 C536.5 532.7 535.6 530.6 538.5 535 C541.4 539.4 540.1 538.1 543.5 540.3 C546.9 542.5 545.6 542.2 548.8 541.6 C552 541 550.9 542.3 553 538.5 C555.1 534.7 554.5 533 555.2 530.2"/>
<path d="M547 505 C545.5 504.8 545.2 503.5 542.5 504.5 C539.8 505.5 540.6 504.5 538.8 508 C537 511.5 537.4 510 537 515 C536.6 520 536.4 517.7 537.6 523 C538.8 528.3 538.2 526.6 540.5 531 C542.8 535.4 541.8 534.2 544.5 536.3 C547.2 538.4 546.2 537.8 548.5 537.2 C550.8 536.6 550 536.6 551.5 534.5 C553 532.4 551.8 532.2 553 530.8 C554.2 529.4 554.5 530.4 555.2 530.2"/>
<ellipse cx="576.8" cy="512.6" rx="9.6" ry="15.4" transform="rotate(-10 576.8 512.6)" fill="#fff"/>
<path d="M566.5 498.4 L573.3 497.6 L580.3 527.6 L573.9 530.6Z" fill="#fff" stroke="none"/>
<path d="M569 498.1 L575.8 497.4"/>
<path d="M570.6 498.5 L577.3 497.7"/>
<path d="M572.7 499.6 L579.4 498.7"/>
<path d="M574.2 500.9 L580.8 499.9"/>
<path d="M576 503.1 L582.6 501.9"/>
<path d="M577.2 505.1 L583.8 503.8"/>
<path d="M578.6 508.1 L585.1 506.6"/>
<path d="M579.4 510.5 L585.8 508.8"/>
<path d="M580 513.9 L586.4 512"/>
<path d="M580.3 516.5 L586.6 514.4"/>
<path d="M580.2 519.9 L586.5 517.5"/>
<path d="M579.8 522.2 L586.1 519.7"/>
<path d="M579 525.1 L585.3 522.4"/>
<path d="M578.1 526.9 L584.4 524.1"/>
<path d="M576.6 528.9 L583 525.9"/>
<path d="M575.3 530 L581.7 526.9"/>
<path d="M573.4 530.8 L579.8 527.7"/>
<path d="M571.9 530.9 L578.3 527.9"/>
<path d="M565.7 498.7 C566.4 498.5 566.3 498.2 567.7 498.1 C569.2 498 568.5 497.9 569.9 498.3 C571.4 498.6 570.7 498.3 572.1 499.2 C573.5 500.1 572.9 499.6 574.2 500.9 C575.5 502.2 574.9 501.5 576.1 503.2 C577.3 504.9 576.8 504 577.7 506 C578.7 508.1 578.3 507.1 579 509.3 C579.7 511.6 579.4 510.4 579.9 512.8 C580.3 515.2 580.1 514 580.2 516.4 C580.4 518.7 580.4 517.6 580.2 519.9 C580 522.1 580.1 521.1 579.6 523.1 C579.1 525.1 579.4 524.2 578.6 525.9 C577.8 527.6 578.3 526.9 577.2 528.2 C576.2 529.5 576.7 529 575.5 529.9 C574.2 530.7 574.9 530.4 573.5 530.8 C572.1 531.1 572.1 530.8 571.4 530.9" fill="#fff"/>
<path d="M572.7 528.6 C572 528.9 572 529.2 570.5 529.5 C568.9 529.9 569.7 529.8 568.1 529.7 C566.5 529.5 567.3 529.7 565.7 529 C564.1 528.4 564.8 528.8 563.4 527.7 C561.9 526.6 562.6 527.2 561.3 525.7 C560 524.2 560.6 525 559.5 523.2 C558.5 521.3 558.9 522.3 558.2 520.2 C557.5 518.2 557.7 519.2 557.4 517 C557 514.8 557.1 515.9 557 513.7 C557 511.5 557 512.5 557.3 510.5 C557.6 508.4 557.4 509.3 558.1 507.5 C558.8 505.6 558.4 506.4 559.4 504.9 C560.4 503.4 559.8 504 561.1 502.8 C562.3 501.7 561.7 502.1 563.1 501.5 C564.6 500.8 563.8 501 565.4 500.8 C567 500.6 567 500.8 567.8 500.8" fill="#fff"/>
<path d="M572 525.7 C571.5 525.9 571.5 526.1 570.4 526.4 C569.3 526.6 569.9 526.6 568.7 526.5 C567.6 526.3 568.1 526.5 567 526 C565.9 525.4 566.4 525.8 565.3 524.9 C564.3 524 564.8 524.5 563.8 523.3 C562.9 522.1 563.3 522.8 562.5 521.3 C561.8 519.9 562.1 520.6 561.6 519 C561 517.4 561.2 518.2 560.9 516.5 C560.6 514.8 560.7 515.6 560.7 513.9 C560.6 512.2 560.6 513 560.8 511.4 C561 509.8 560.8 510.5 561.3 509.1 C561.8 507.6 561.5 508.3 562.2 507.1 C562.9 505.9 562.5 506.4 563.4 505.5 C564.3 504.6 563.8 505 564.8 504.4 C565.9 503.9 565.3 504.1 566.5 503.9 C567.6 503.8 567.6 504 568.2 504" fill="#fff"/>
<path d="M572.7 528.6 L572 525.7"/>
<path d="M567.8 500.8 L568.2 504"/>
<ellipse cx="567" cy="515.3" rx="5" ry="8.2" transform="rotate(-10 567 515.3)" fill="#fff"/>
<ellipse cx="566.8" cy="515.3" rx="3" ry="5" transform="rotate(-10 566.8 515.3)"/>
<ellipse cx="566.6" cy="515.3" rx="1.4" ry="2.4" transform="rotate(-10 566.6 515.3)"/>
<ellipse cx="609.6" cy="503.3" rx="10.6" ry="18.8" transform="rotate(-10 609.6 503.3)" fill="#fff"/>
<ellipse cx="606.8" cy="504.3" rx="10.6" ry="18.8" transform="rotate(-10 606.8 504.3)" fill="#fff"/>
<ellipse cx="604.6" cy="504.8" rx="10.6" ry="18.8" transform="rotate(-10 604.6 504.8)" fill="#fff"/>
<ellipse cx="605.8" cy="505.1" rx="7.8" ry="15" transform="rotate(-10 605.8 505.1)"/>
<ellipse cx="607.8" cy="505" rx="6.4" ry="13.2" transform="rotate(-10 607.8 505)"/>
</g>
<g font-family="'Liberation Serif',serif" font-size="13.3px" stroke-width="0.15">
<rect x="514" y="328.2" width="20.8" height="16.6" fill="#c0c0c0"/>
<text x="517.6" y="342.7" textLength="13.5" lengthAdjust="spacingAndGlyphs" fill="#333" stroke="#333">57</text>
<rect x="535.2" y="321.2" width="19.8" height="16.5" fill="#c0c0c0"/>
<text x="537.6" y="335.3" textLength="13.6" lengthAdjust="spacingAndGlyphs" fill="#333" stroke="#333">51</text>
<rect x="559" y="316.2" width="21" height="16.5" fill="#c0c0c0"/>
<text x="562.1" y="330.3" textLength="14.1" lengthAdjust="spacingAndGlyphs" fill="#333" stroke="#333">54</text>
<rect x="404" y="367.2" width="19" height="15" fill="#ffee00" stroke="#0000ff" stroke-width="2"/>
<text x="406.4" y="380.3" textLength="15.5" lengthAdjust="spacingAndGlyphs" fill="#2020ff" stroke="#2020ff">87</text>
<text x="388.3" y="389" textLength="14.8" lengthAdjust="spacingAndGlyphs" fill="#1a1a1a" stroke="#1a1a1a">84</text>
<text x="422.1" y="368.3" textLength="13.7" lengthAdjust="spacingAndGlyphs" fill="#1a1a1a" stroke="#1a1a1a">81</text>
<text x="452" y="374" textLength="14.2" lengthAdjust="spacingAndGlyphs" fill="#1a1a1a" stroke="#1a1a1a">78</text>
<text x="355.7" y="423.3" textLength="14.8" lengthAdjust="spacingAndGlyphs" fill="#1a1a1a" stroke="#1a1a1a">90</text>
<text x="372" y="554.6" textLength="21.7" lengthAdjust="spacingAndGlyphs" fill="#1a1a1a" stroke="#1a1a1a">126</text>
<text x="403.9" y="544.6" textLength="21.1" lengthAdjust="spacingAndGlyphs" fill="#1a1a1a" stroke="#1a1a1a">123</text>
<text x="435.8" y="527" textLength="21.4" lengthAdjust="spacingAndGlyphs" fill="#1a1a1a" stroke="#1a1a1a">120</text>
<text x="465.1" y="567.1" textLength="20.4" lengthAdjust="spacingAndGlyphs" fill="#1a1a1a" stroke="#1a1a1a">117</text>
<text x="504.6" y="564.6" textLength="21" lengthAdjust="spacingAndGlyphs" fill="#1a1a1a" stroke="#1a1a1a">114</text>
<text x="543.2" y="557.1" textLength="15.4" lengthAdjust="spacingAndGlyphs" fill="#1a1a1a" stroke="#1a1a1a">96</text>
<text x="568.3" y="545.9" textLength="14.8" lengthAdjust="spacingAndGlyphs" fill="#1a1a1a" stroke="#1a1a1a">93</text>
<text x="603.1" y="538.3" textLength="14.8" lengthAdjust="spacingAndGlyphs" fill="#1a1a1a" stroke="#1a1a1a">99</text>
</g>
</svg>
</div></body></html>
